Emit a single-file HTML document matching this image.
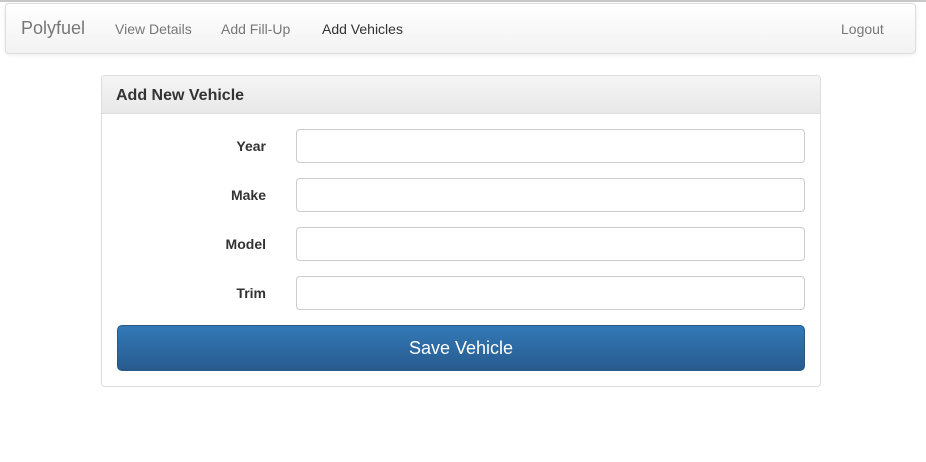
<!DOCTYPE html>
<html><head><style>
body{margin:0;background:#fff;font-family:"Liberation Sans",sans-serif;width:926px;height:462px;overflow:hidden;position:relative}
.top{position:absolute;left:0;top:0;width:926px;height:2px;background:#c8c8c8}
.nav{position:absolute;left:5px;top:3px;width:909px;height:49px;border:1px solid #ddd;border-radius:4px;background:linear-gradient(#fff,#f2f2f2);box-shadow:0 1px 4px rgba(0,0,0,.08)}
.nav span{position:absolute;top:17px;font-size:14px;color:#777}
.brand{font-size:18px!important;top:14px!important;left:15px}
.panel{position:absolute;left:101px;top:75px;width:718px;height:310px;border:1px solid #ddd;border-radius:4px}
.ph{height:37px;border-bottom:1px solid #ddd;background:linear-gradient(#f5f5f5,#e8e8e8);border-radius:4px 4px 0 0;font-size:16px;font-weight:bold;color:#333;line-height:40px;padding-left:14px}
.lbl{position:absolute;width:164px;text-align:right;font-size:14px;font-weight:bold;color:#333;left:0}
.in{position:absolute;left:194px;width:507px;height:32px;border:1px solid #ccc;border-radius:4px}
.btn{position:absolute;left:15px;top:249px;width:686px;height:44px;border:1px solid #2a5883;border-radius:5px;background:linear-gradient(#3379b7,#275b8e);color:#fff;font-size:18px;text-align:center;line-height:44px}
</style></head><body>
<div class="top"></div>
<div class="nav">
<span class="brand">Polyfuel</span>
<span style="left:109px">View Details</span>
<span style="left:215px">Add Fill-Up</span>
<span style="left:316px;color:#333">Add Vehicles</span>
<span style="left:835px">Logout</span>
</div>
<div class="panel">
<div class="ph">Add New Vehicle</div>
<div class="lbl" style="top:62px">Year</div><div class="in" style="top:53px"></div>
<div class="lbl" style="top:111px">Make</div><div class="in" style="top:102px"></div>
<div class="lbl" style="top:160px">Model</div><div class="in" style="top:151px"></div>
<div class="lbl" style="top:209px">Trim</div><div class="in" style="top:200px"></div>
<div class="btn">Save Vehicle</div>
</div>
</body></html>
